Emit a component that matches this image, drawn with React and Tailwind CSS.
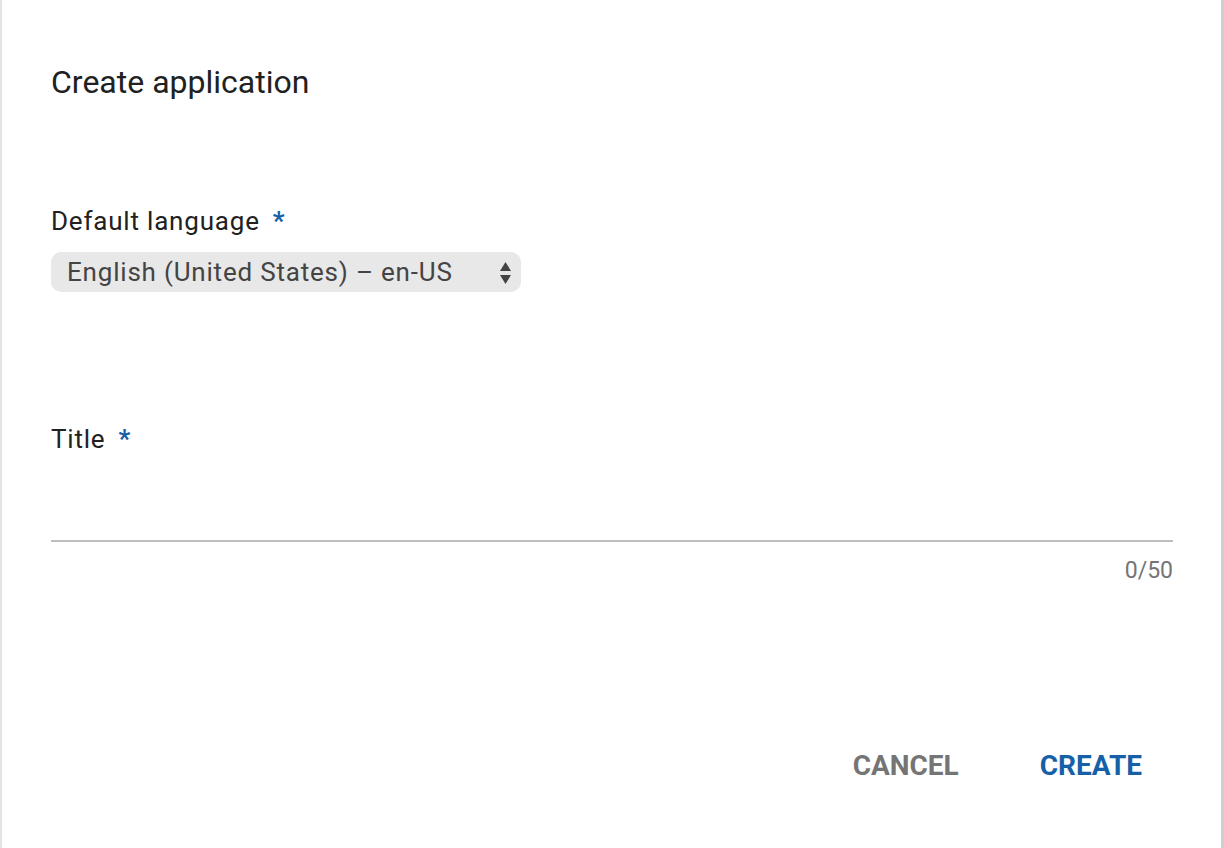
import React, { useState } from 'react';

const Required = () => <span className="ml-[13px] text-[#1660a8] font-bold">*</span>;

const App = () => {
  const [title, setTitle] = useState('');

  return (
    <div className="w-[1224px] h-[848px] bg-white border-l-2 border-l-[#e4e4e4] border-r-[3px] border-r-[#cfcfcf] font-['Roboto',sans-serif] text-[#212121]">
      <div className="pl-[49px] pr-[48px] pt-[64px] flex flex-col">
        <h2 className="text-[32px] leading-[36px]">Create application</h2>

        <label className="mt-[106px] text-[26px] leading-[30px] tracking-[0.8px]">
          Default language<Required />
        </label>
        <div className="mt-[16px] w-[470px] h-[40px] rounded-[10px] bg-[#e8e8e8] flex items-center justify-between pl-[16px] pr-[9px]">
          <span className="text-[26px] tracking-[0.8px] text-[#444]">English (United States) – en-US</span>
          <svg width="13" height="25" viewBox="0 0 13 25">
            <path d="M6.5 2 L12 11 L1 11 Z" fill="#444" />
            <path d="M6.5 24 L12 15 L1 15 Z" fill="#444" />
          </svg>
        </div>

        <label className="mt-[132px] text-[26px] leading-[30px] tracking-[0.8px]">
          Title<Required />
        </label>
        <input
          value={title}
          onChange={e => setTitle(e.target.value)}
          className="mt-[58px] h-[30px] border-b-2 border-b-[#bdbdbd] outline-none text-[26px]"
        />
        <div className="mt-[16px] self-end text-[23px] text-[#757575] leading-[26px]">{title.length}/50</div>

        <div className="mt-[166px] flex justify-end gap-[81px] pr-[31px]">
          <button className="text-[28px] leading-[32px] font-bold text-[#757575]">CANCEL</button>
          <button className="text-[28px] leading-[32px] font-bold text-[#1660a8]">CREATE</button>
        </div>
      </div>
    </div>
  );
};

export default App;
